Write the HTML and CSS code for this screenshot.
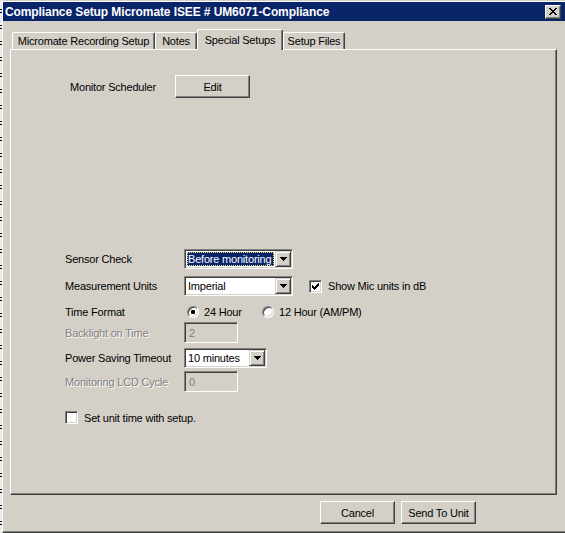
FILE: index.html
```html
<!DOCTYPE html>
<html>
<head>
<meta charset="utf-8">
<title>Compliance Setup</title>
<link rel="stylesheet" href="styles.css">
</head>
<body>
<div class="desk">
  <div class="strip"></div>
  <div class="window">
    <div class="titlebar">
      <span class="title">Compliance Setup Micromate ISEE # UM6071-Compliance</span>
      <div class="close">
        <svg width="8" height="7" viewBox="0 0 8 7" shape-rendering="crispEdges"><path fill="#000" d="M0 0h2v1h-2z M6 0h2v1h-2z M1 1h2v1h-2z M5 1h2v1h-2z M2 2h4v1h-4z M3 3h2v1h-2z M2 4h4v1h-4z M1 5h2v1h-2z M5 5h2v1h-2z M0 6h2v1h-2z M6 6h2v1h-2z"/></svg>
      </div>
    </div>
    <div class="tabs">
      <div class="tab t1">Micromate Recording Setup</div>
      <div class="tab t2">Notes</div>
      <div class="tab sel">Special Setups</div>
      <div class="tab t4">Setup Files</div>
    </div>
    <div class="panel">
      <div class="sched">
        <span class="sched-label">Monitor Scheduler</span>
        <div class="btn edit">Edit</div>
      </div>
      <div class="form">
        <div class="row">
          <span class="lbl">Sensor Check</span>
          <div class="combo w109">
            <div class="val"><span class="hl">Before monitoring</span></div>
            <div class="arrow"><svg width="7" height="4" viewBox="0 0 7 4" shape-rendering="crispEdges"><path fill="#000" d="M0 0h7v1h-7z M1 1h5v1h-5z M2 2h3v1h-3z M3 3h1v1h-1z"/></svg></div>
          </div>
        </div>
        <div class="row mt7">
          <span class="lbl">Measurement Units</span>
          <div class="combo w109">
            <div class="val pad">Imperial</div>
            <div class="arrow"><svg width="7" height="4" viewBox="0 0 7 4" shape-rendering="crispEdges"><path fill="#000" d="M0 0h7v1h-7z M1 1h5v1h-5z M2 2h3v1h-3z M3 3h1v1h-1z"/></svg></div>
          </div>
          <div class="check-item mic">
            <div class="cb"><svg width="7" height="7" viewBox="0 0 7 7" shape-rendering="crispEdges"><path fill="#000" d="M6 0h1v1h-1z M5 1h2v1h-2z M0 2h1v1h-1z M4 2h3v1h-3z M0 3h2v1h-2z M3 3h3v1h-3z M0 4h5v1h-5z M1 5h3v1h-3z M2 6h1v1h-1z"/></svg></div>
            <span>Show Mic units in dB</span>
          </div>
        </div>
        <div class="row mt6">
          <span class="lbl">Time Format</span>
          <div class="radio-item r1"><div class="radio on"><div class="dot"></div></div><span>24 Hour</span></div>
          <div class="radio-item"><div class="radio"></div><span>12 Hour (AM/PM)</span></div>
        </div>
        <div class="row h21">
          <span class="lbl dis">Backlight on Time</span>
          <div class="tb">2</div>
        </div>
        <div class="row mt5">
          <span class="lbl">Power Saving Timeout</span>
          <div class="combo w83">
            <div class="val pad">10 minutes</div>
            <div class="arrow"><svg width="7" height="4" viewBox="0 0 7 4" shape-rendering="crispEdges"><path fill="#000" d="M0 0h7v1h-7z M1 1h5v1h-5z M2 2h3v1h-3z M3 3h1v1h-1z"/></svg></div>
          </div>
        </div>
        <div class="row mt3 h21">
          <span class="lbl dis">Monitoring LCD Cycle</span>
          <div class="tb">0</div>
        </div>
        <div class="row mt19 h13">
          <div class="check-item">
            <div class="cb"></div>
            <span>Set unit time with setup.</span>
          </div>
        </div>
      </div>
    </div>
    <div class="footer">
      <div class="btn">Cancel</div>
      <div class="btn">Send To Unit</div>
    </div>
  </div>
</div>
</body>
</html>
```
FILE: styles.css
```css
* { box-sizing: border-box; }
html, body { margin: 0; padding: 0; }
body {
  width: 565px;
  height: 533px;
  overflow: hidden;
  background: #d4d0c8;
  font-family: "Liberation Sans", Arial, sans-serif;
  font-size: 11px;
  letter-spacing: -0.2px;
  color: #000;
}
.desk { display: flex; height: 533px; }
.strip {
  width: 2px;
  flex: none;
  background: repeating-linear-gradient(to bottom, #ececec 0 9px, #000 9px 10px, #ececec 10px 12px, #000 12px 13px, #ececec 13px 16px);
}
.window {
  flex: none;
  width: 563px;
  height: 533px;
  background: #d4d0c8;
  border-left: 1px solid #fff;
  border-top: 1px solid #d4d0c8;
  border-bottom: 1px solid #404040;
  padding-top: 1px;
  box-shadow: inset 0 1px #fff, inset 0 -1px #808080;
  display: flex;
  flex-direction: column;
}
.titlebar {
  height: 19px;
  flex: none;
  background: #0a246a;
  color: #fff;
  display: flex;
  align-items: center;
  padding-left: 2px;
}
.title { font-weight: bold; font-size: 12px; letter-spacing: -0.1px; white-space: nowrap; }
.close {
  margin-left: auto;
  margin-right: 4px;
  width: 16px;
  height: 14px;
  background: #d4d0c8;
  border: 1px solid;
  border-color: #fff #404040 #404040 #fff;
  box-shadow: inset -1px -1px #808080;
  display: flex;
  align-items: center;
  justify-content: center;
}
.close svg, .arrow svg, .cb svg { display: block; }
.tabs {
  display: flex;
  align-items: flex-end;
  margin-top: 8px;
  padding-left: 9px;
  height: 20px;
  flex: none;
  position: relative;
  z-index: 1;
}
.tab {
  height: 17px;
  display: flex;
  align-items: center;
  justify-content: center;
  white-space: nowrap;
  background: #d4d0c8;
  border-top: 1px solid #fff;
  border-left: 1px solid #fff;
  border-right: 1px solid #404040;
  box-shadow: inset -1px 0 #808080;
  border-radius: 2px 2px 0 0;
}
.t1 { width: 143px; }
.t2 { width: 42px; }
.t4 { width: 62px; }
.tab.sel { width: 86px; height: 21px; margin-bottom: -1px; padding-bottom: 1px; }
.panel {
  margin-left: 7px;
  width: 547px;
  height: 446px;
  flex: none;
  border-top: 1px solid #fff;
  border-left: 1px solid #fff;
  border-right: 1px solid #404040;
  border-bottom: 1px solid #404040;
  box-shadow: inset -1px -1px #808080;
}
.sched {
  display: flex;
  align-items: center;
  margin-top: 25px;
  padding-left: 59px;
}
.sched-label { width: 105px; flex: none; }
.btn {
  width: 75px;
  height: 23px;
  flex: none;
  display: flex;
  align-items: center;
  justify-content: center;
  white-space: nowrap;
  background: #d4d0c8;
  border: 1px solid;
  border-color: #fff #404040 #404040 #fff;
  box-shadow: inset -1px -1px #808080;
}
.form {
  margin-top: 151px;
  padding-left: 54px;
  display: flex;
  flex-direction: column;
}
.row { display: flex; align-items: center; height: 20px; flex: none; }
.row.h21 { height: 21px; }
.row.h13 { height: 13px; }
.mt3 { margin-top: 3px; }
.mt5 { margin-top: 5px; }
.mt6 { margin-top: 6px; }
.mt7 { margin-top: 7px; }
.mt19 { margin-top: 19px; }
.lbl { width: 119px; flex: none; white-space: nowrap; }
.dis { color: #808080; text-shadow: 1px 1px 0 #fff; }
.combo {
  height: 20px;
  flex: none;
  display: flex;
  background: #fff;
  border: 1px solid;
  border-color: #808080 #fff #fff #808080;
  box-shadow: inset 1px 1px #404040, inset -1px -1px #d4d0c8;
  padding: 1px;
}
.w109 { width: 109px; }
.w83 { width: 83px; }
.val { flex: 1; display: flex; align-items: center; white-space: nowrap; min-width: 0; }
.val.pad { padding-left: 2px; }
.hl {
  align-self: stretch;
  flex: 1;
  margin: 1px;
  padding-left: 1px;
  display: flex;
  align-items: center;
  background: #0a246a;
  color: #fff;
  outline: 1px dotted #e8e070;
  outline-offset: -1px;
}
.arrow {
  width: 16px;
  flex: none;
  background: #d4d0c8;
  border: 1px solid;
  border-color: #d4d0c8 #404040 #404040 #d4d0c8;
  box-shadow: inset 1px 1px #fff, inset -1px -1px #808080;
  display: flex;
  align-items: center;
  justify-content: center;
}
.check-item { display: flex; align-items: center; gap: 6px; white-space: nowrap; }
.check-item.mic { margin-left: 16px; }
.cb {
  width: 13px;
  height: 13px;
  flex: none;
  background: #fff;
  border: 1px solid;
  border-color: #808080 #fff #fff #808080;
  box-shadow: inset 1px 1px #404040, inset -1px -1px #d4d0c8;
  display: flex;
  align-items: center;
  justify-content: center;
}
.radio-item { display: flex; align-items: center; gap: 5px; white-space: nowrap; }
.radio-item.r1 { width: 75px; margin-left: 3px; }
.radio {
  width: 12px;
  height: 12px;
  flex: none;
  border-radius: 50%;
  background: #fff;
  border: 1px solid;
  border-color: #808080 #fff #fff #808080;
  box-shadow: inset 1px 1px #404040, inset -1px -1px #d4d0c8;
  display: flex;
  align-items: center;
  justify-content: center;
}
.dot { width: 4px; height: 4px; border-radius: 1px; background: #000; }
.tb {
  width: 54px;
  height: 21px;
  flex: none;
  display: flex;
  align-items: center;
  padding-left: 4px;
  color: #808080;
  background: #d4d0c8;
  border: 1px solid;
  border-color: #808080 #fff #fff #808080;
  box-shadow: inset 1px 1px #404040, inset -1px -1px #d4d0c8;
}
.footer {
  display: flex;
  gap: 6px;
  margin-top: 6px;
  padding-left: 317px;
}
```
